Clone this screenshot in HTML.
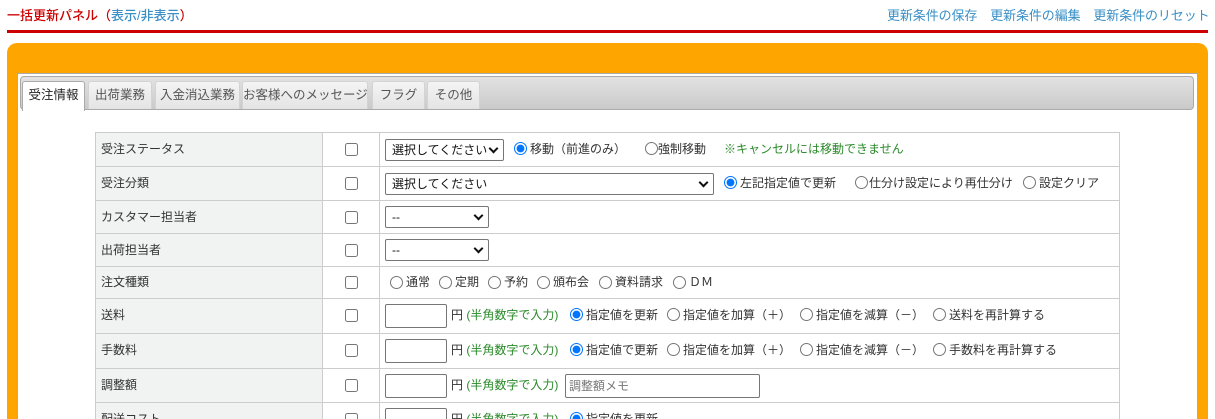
<!DOCTYPE html>
<html><head><meta charset="utf-8">
<style>
*{box-sizing:border-box}
html{overflow:hidden;height:419px}
body{margin:0;width:1215px;height:419px;overflow:hidden;background:#fff;font-family:"Liberation Sans","Noto Sans CJK JP",sans-serif;font-size:12px;color:#333;position:relative}
.a{position:absolute;white-space:nowrap;line-height:14px}
.g{color:#2a8a2a}
input[type=radio],input[type=checkbox]{position:absolute;margin:0;width:13px;height:13px}
.sel{position:absolute;height:22px;border:1px solid #767676;border-radius:2px;background:#fff;font-size:12px;line-height:20px;padding-left:6px;color:#111}
.sel:after{content:"";position:absolute;right:6px;top:5px;width:5px;height:5px;border-right:2px solid #111;border-bottom:2px solid #111;transform:rotate(45deg)}
.inp{position:absolute;height:24px;border:1px solid #767676;border-radius:2px;background:#fff}
.tab{position:absolute;top:81px;height:28px;background:linear-gradient(#f4f4f4,#e4e4e4);border:1px solid #d3d3d3;border-bottom:none;border-radius:3px 3px 0 0;color:#555;font-size:12.5px;text-align:center;line-height:27px;white-space:nowrap;overflow:hidden}
.rowline{position:absolute;left:95px;width:1025px;height:1px;background:#ccc}
</style></head><body>
<div class="a" style="left:7px;top:9px;color:#c00;font-size:13px;font-weight:500">一括更新パネル（<span style="color:#3a8fc6">表示/非表示</span>）</div>
<div class="a" style="left:887px;top:9px;color:#3a8fc6;font-size:13px;letter-spacing:-0.1px">更新条件の保存　更新条件の編集　更新条件のリセット</div>
<div style="position:absolute;left:7px;top:30px;width:1201px;height:3px;background:#c00"></div>
<div style="position:absolute;left:7px;top:43px;width:1201px;height:376px;background:#ffa500;border-radius:10px 10px 0 0"></div>
<div style="position:absolute;left:17px;top:73px;width:1181px;height:346px;background:#fff;border:1px solid #aaa;border-bottom:none"></div>
<div style="position:absolute;left:20px;top:76px;width:1174px;height:34px;background:linear-gradient(#e2e2e2,#cacaca);border:1px solid #aaa;border-radius:4px"></div>
<div class="tab" style="left:22px;width:63px;background:#fff;color:#222;height:30px;border-color:#aaa">受注情報</div>
<div class="tab" style="left:88px;width:64px">出荷業務</div>
<div class="tab" style="left:155px;width:85px">入金消込業務</div>
<div class="tab" style="left:242px;width:126px">お客様へのメッセージ</div>
<div class="tab" style="left:372px;width:53px">フラグ</div>
<div class="tab" style="left:427px;width:53px">その他</div>

<div style="position:absolute;left:95px;top:132px;width:227px;height:287px;background:#f1f2f2"></div>
<div style="position:absolute;left:95px;top:132px;width:1px;height:287px;background:#ccc"></div>
<div style="position:absolute;left:322px;top:132px;width:1px;height:287px;background:#ccc"></div>
<div style="position:absolute;left:379px;top:132px;width:1px;height:287px;background:#ccc"></div>
<div style="position:absolute;left:1119px;top:132px;width:1px;height:287px;background:#ccc"></div>
<div class="rowline" style="top:132px"></div>
<div class="rowline" style="top:166px"></div>
<div class="rowline" style="top:200px"></div>
<div class="rowline" style="top:233px"></div>
<div class="rowline" style="top:266px"></div>
<div class="rowline" style="top:298px"></div>
<div class="rowline" style="top:333px"></div>
<div class="rowline" style="top:368px"></div>
<div class="rowline" style="top:402px"></div>

<div class="a" style="left:101px;top:142px">受注ステータス</div>
<div class="a" style="left:101px;top:176px">受注分類</div>
<div class="a" style="left:101px;top:210px">カスタマー担当者</div>
<div class="a" style="left:101px;top:243px">出荷担当者</div>
<div class="a" style="left:101px;top:275px">注文種類</div>
<div class="a" style="left:101px;top:308px">送料</div>
<div class="a" style="left:101px;top:343px">手数料</div>
<div class="a" style="left:101px;top:378px">調整額</div>

<input type="checkbox" style="left:345px;top:143px"><input type="checkbox" style="left:345px;top:177px"><input type="checkbox" style="left:345px;top:211px"><input type="checkbox" style="left:345px;top:244px"><input type="checkbox" style="left:345px;top:276px"><input type="checkbox" style="left:345px;top:309px"><input type="checkbox" style="left:345px;top:344px"><input type="checkbox" style="left:345px;top:379px">

<div class="sel" style="left:385px;top:139px;width:119px">選択してください</div>
<input type="radio" checked style="left:514px;top:142px"><div class="a" style="left:530px;top:142px">移動（前進のみ）</div>
<input type="radio" style="left:645px;top:142px"><div class="a" style="left:658px;top:142px">強制移動</div>
<div class="a g" style="left:724px;top:142px">※キャンセルには移動できません</div>

<div class="sel" style="left:385px;top:173px;width:329px">選択してください</div>
<input type="radio" checked style="left:724px;top:176px"><div class="a" style="left:740px;top:176px">左記指定値で更新</div>
<input type="radio" style="left:855px;top:176px"><div class="a" style="left:869px;top:176px">仕分け設定により再仕分け</div>
<input type="radio" style="left:1023px;top:176px"><div class="a" style="left:1039px;top:176px">設定クリア</div>

<div class="sel" style="left:385px;top:206px;width:104px">--</div>
<div class="sel" style="left:385px;top:239px;width:104px">--</div>

<input type="radio" style="left:390px;top:276px"><div class="a" style="left:406px;top:275px">通常</div>
<input type="radio" style="left:439px;top:276px"><div class="a" style="left:455px;top:275px">定期</div>
<input type="radio" style="left:488px;top:276px"><div class="a" style="left:504px;top:275px">予約</div>
<input type="radio" style="left:537px;top:276px"><div class="a" style="left:553px;top:275px">頒布会</div>
<input type="radio" style="left:599px;top:276px"><div class="a" style="left:615px;top:275px">資料請求</div>
<input type="radio" style="left:673px;top:276px"><div class="a" style="left:689px;top:275px">ＤＭ</div>

<div class="inp" style="left:385px;top:304px;width:62px"></div>
<div class="a" style="left:451px;top:308px">円 <span class="g">(半角数字で入力)</span></div>
<input type="radio" checked style="left:570px;top:308px"><div class="a" style="left:586px;top:308px">指定値を更新</div>
<input type="radio" style="left:667px;top:308px"><div class="a" style="left:683px;top:308px">指定値を加算（＋）</div>
<input type="radio" style="left:800px;top:308px"><div class="a" style="left:816px;top:308px">指定値を減算（－）</div>
<input type="radio" style="left:933px;top:308px"><div class="a" style="left:949px;top:308px">送料を再計算する</div>

<div class="inp" style="left:385px;top:339px;width:62px"></div>
<div class="a" style="left:451px;top:343px">円 <span class="g">(半角数字で入力)</span></div>
<input type="radio" checked style="left:570px;top:343px"><div class="a" style="left:586px;top:343px">指定値で更新</div>
<input type="radio" style="left:667px;top:343px"><div class="a" style="left:683px;top:343px">指定値を加算（＋）</div>
<input type="radio" style="left:800px;top:343px"><div class="a" style="left:816px;top:343px">指定値を減算（－）</div>
<input type="radio" style="left:933px;top:343px"><div class="a" style="left:949px;top:343px">手数料を再計算する</div>

<div class="inp" style="left:385px;top:374px;width:62px"></div>
<div class="a" style="left:451px;top:378px">円 <span class="g">(半角数字で入力)</span></div>
<div class="inp" style="left:565px;top:374px;width:195px;color:#777;padding-left:3px;line-height:22px">調整額メモ</div>

<div style="position:absolute;left:0;top:402px;width:1215px;height:17px;overflow:hidden">
<div class="a" style="left:101px;top:10px">配送コスト</div>
<input type="checkbox" style="left:345px;top:11px">
<div class="inp" style="left:385px;top:6px;width:62px"></div>
<div class="a" style="left:451px;top:10px">円 <span class="g">(半角数字で入力)</span></div>
<input type="radio" checked style="left:570px;top:10px"><div class="a" style="left:586px;top:10px">指定値を更新</div>
</div>
</body></html>
